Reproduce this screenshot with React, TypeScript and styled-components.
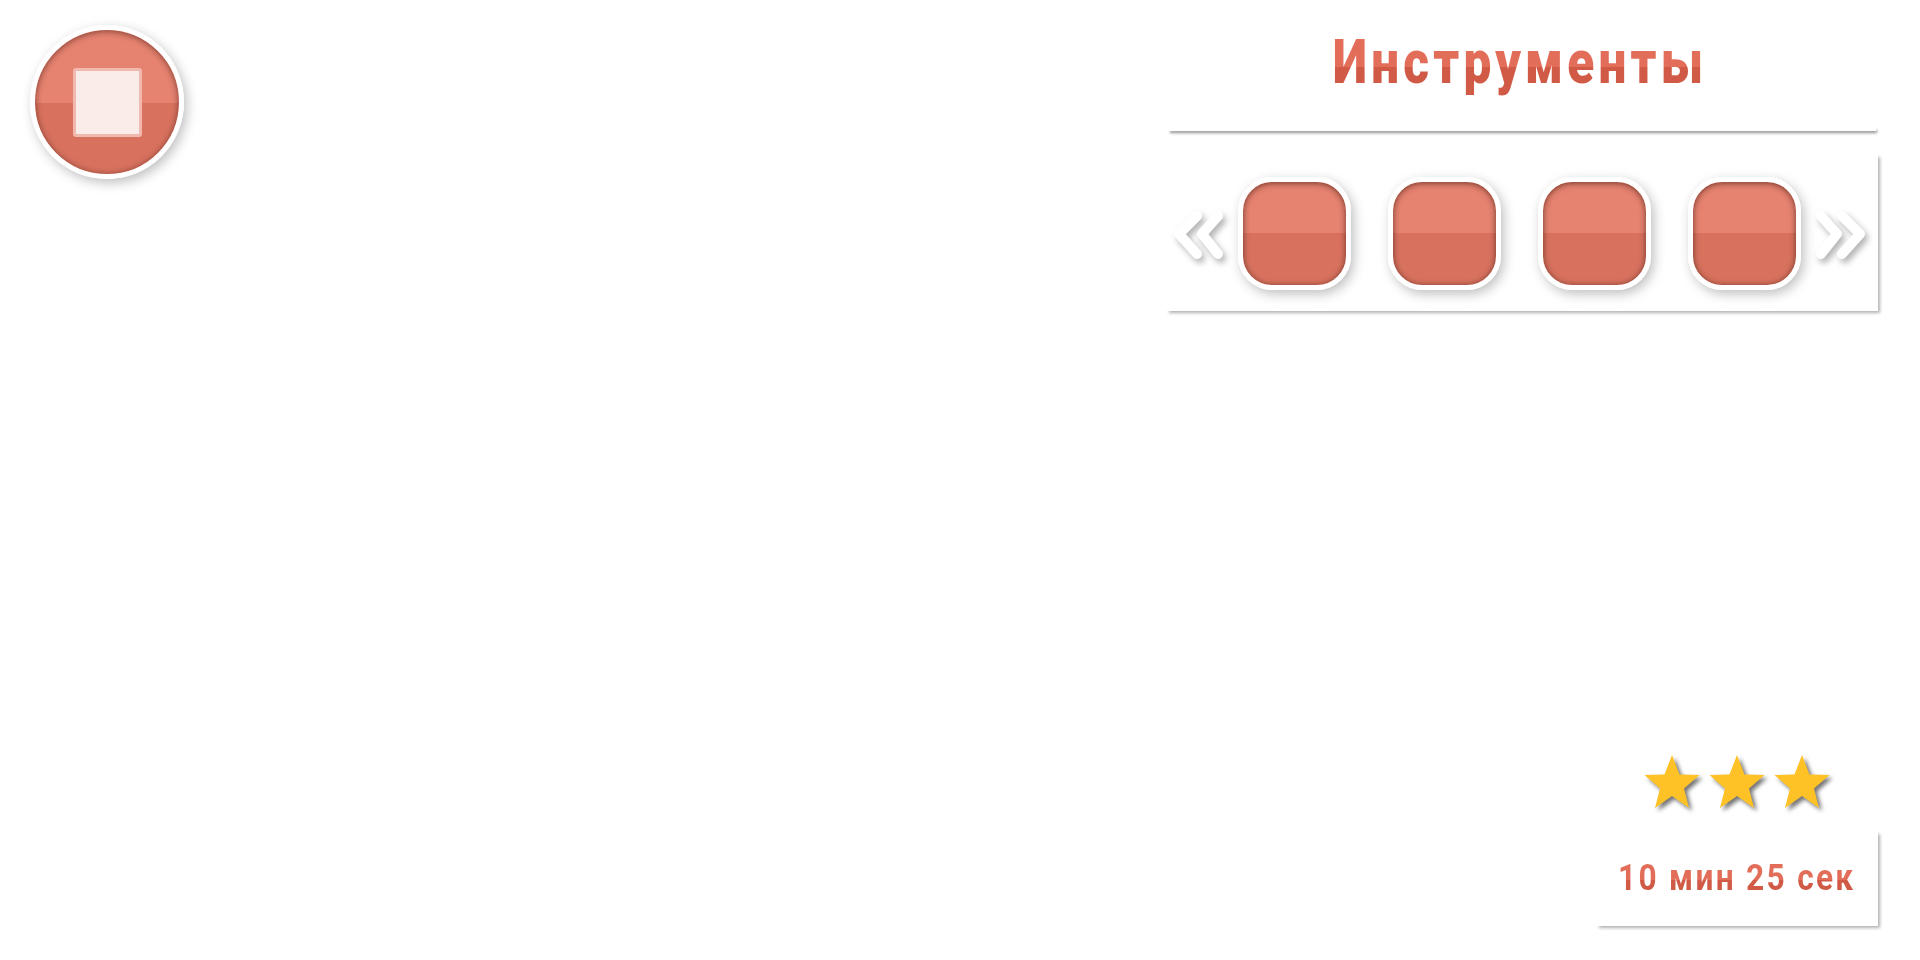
import React, {FC} from 'react';
import styled, {createGlobalStyle} from 'styled-components';

const GlobalStyle = createGlobalStyle`
    html, body {
        margin: 0;
        padding: 0;
        background: #fff;
    }
`;

const TOOLS = [1, 2, 3, 4];
const STARS = [1, 2, 3];

/** Двойная стрелка карусели */
const Chevrons: FC<{flip?: boolean}> = ({flip}) => (
    <ChevronIcon $flip={flip} viewBox="0 0 50 46">
        <path d="M24 5 L6 23 L24 43" />
        <path d="M45 5 L29 23 L45 43" />
    </ChevronIcon>
);

const Star: FC = () => (
    <StarIcon viewBox="0 0 55 53">
        <polygon points="27.5,0 35,19.5 55,20 39.5,33.5 44.5,53 27.5,41 10.5,53 15.5,33.5 0,20 20,19.5" />
    </StarIcon>
);

export default function App() {
    return (
        <Page>
            <GlobalStyle />
            <StopButton>
                <StopMark />
            </StopButton>
            <Sidebar>
                <div>
                    <TitlePanel>
                        <Title>Инструменты</Title>
                        <TitleRule />
                    </TitlePanel>
                    <ToolsPanel>
                        <Chevrons />
                        <ToolsRow>
                            {TOOLS.map((id) => (
                                <ToolButton key={id} />
                            ))}
                        </ToolsRow>
                        <Chevrons flip />
                    </ToolsPanel>
                </div>
                <Result>
                    <Stars>
                        {STARS.map((id) => (
                            <Star key={id} />
                        ))}
                    </Stars>
                    <TimePanel>
                        <TimeText>10 мин 25 сек</TimeText>
                    </TimePanel>
                </Result>
            </Sidebar>
        </Page>
    );
}

const Page = styled.div`
    display: flex;
    justify-content: space-between;
    width: 1920px;
    height: 960px;
    box-sizing: border-box;
    padding: 0 42px 34px 30px;
    background: #fff;
    overflow: hidden;
    font-family: Roboto, 'Liberation Sans', sans-serif;
`;

const StopButton = styled.div`
    display: flex;
    align-items: center;
    justify-content: center;
    box-sizing: border-box;
    width: 154px;
    height: 154px;
    margin-top: 25px;
    border: 5px solid #fff;
    border-radius: 50%;
    background: linear-gradient(#e58270 51%, #d8725f 51%);
    box-shadow:
        3px 4px 12px rgba(0, 0, 0, 0.25),
        inset 0 1px 6px rgba(70, 25, 15, 0.65);
`;

const StopMark = styled.div`
    box-sizing: border-box;
    width: 69px;
    height: 69px;
    border: 3px solid #f0b8ae;
    border-radius: 3px;
    background: #faece9;
`;

const Sidebar = styled.div`
    display: flex;
    flex-direction: column;
    justify-content: space-between;
    width: 713px;
`;

const TitlePanel = styled.div`
    display: flex;
    flex-direction: column;
    align-items: center;
    box-sizing: border-box;
    width: 709px;
    height: 131px;
    margin-left: 2px;
    padding-top: 24px;
`;

const Title = styled.div`
    height: 76px;
    margin-right: 3px;
    font-size: 62px;
    font-weight: 900;
    line-height: 76px;
    letter-spacing: 5.2px;
    white-space: nowrap;
    transform: scaleX(0.8);
    background: linear-gradient(#e26e5a 56%, #d05a46 56%);
    -webkit-background-clip: text;
    background-clip: text;
    color: transparent;
`;

const TitleRule = styled.div`
    align-self: stretch;
    height: 5px;
    margin-top: auto;
    background: #fff;
    box-shadow: 2px 3px 3px -1px rgba(0, 0, 0, 0.45);
`;

const ToolsPanel = styled.div`
    display: flex;
    align-items: center;
    box-sizing: border-box;
    height: 158px;
    margin-top: 22px;
    padding: 0 14px 0 8px;
    background: #fff;
    box-shadow: 3px 3px 3px -1px rgba(0, 0, 0, 0.3);
`;

const ToolsRow = styled.div`
    display: flex;
    gap: 37px;
    margin: 2px 15px 0;
`;

const ToolButton = styled.div`
    box-sizing: border-box;
    width: 113px;
    height: 113px;
    border: 5px solid #fff;
    border-radius: 34px;
    background: linear-gradient(#e58270 50%, #d8725f 50%);
    box-shadow:
        3px 4px 12px rgba(0, 0, 0, 0.25),
        inset 0 1px 6px rgba(70, 25, 15, 0.75);
`;

const ChevronIcon = styled.svg<{$flip?: boolean}>`
    flex: none;
    width: 50px;
    height: 46px;
    margin-top: 4px;
    overflow: visible;
    transform: ${({$flip}) => ($flip ? 'scaleX(-1)' : 'none')};
    filter: drop-shadow(${({$flip}) => ($flip ? '-3px' : '3px')} 4px 3px rgba(0, 0, 0, 0.3));

    path {
        fill: none;
        stroke: #fff;
        stroke-width: 10;
        stroke-linecap: round;
        stroke-linejoin: round;
    }
`;

const Result = styled.div`
    display: flex;
    flex-direction: column;
    align-items: flex-end;
`;

const Stars = styled.div`
    display: flex;
    gap: 9px;
    margin: 0 48px 22px 0;
`;

const StarIcon = styled.svg`
    width: 56px;
    height: 53px;
    overflow: visible;
    filter: drop-shadow(3px 3px 2px rgba(0, 0, 0, 0.55));

    polygon {
        fill: #fec227;
    }
`;

const TimePanel = styled.div`
    display: flex;
    align-items: center;
    box-sizing: border-box;
    width: 283px;
    height: 96px;
    padding-left: 23px;
    background: #fff;
    box-shadow: 3px 3px 3px -1px rgba(0, 0, 0, 0.3);
`;

const TimeText = styled.div`
    font-size: 36px;
    font-weight: 700;
    line-height: 44px;
    letter-spacing: 2.6px;
    white-space: nowrap;
    transform-origin: left center;
    transform: scaleX(0.88);
    background: linear-gradient(#e26e5a 55%, #d05a46 55%);
    -webkit-background-clip: text;
    background-clip: text;
    color: transparent;
`;
